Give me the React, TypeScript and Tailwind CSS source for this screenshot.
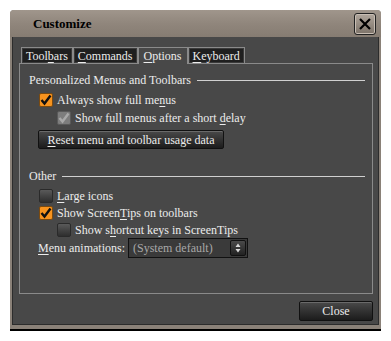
import React from "react";

function U({ children }: { children: React.ReactNode }) {
  return <span className="underline underline-offset-2 decoration-1">{children}</span>;
}

function Check({ state }: { state: "on" | "off" | "dis" }) {
  if (state === "on")
    return (
      <div className="w-[14px] h-[14px] rounded-[2px] bg-[#f7931e] border border-[#7a4a10] flex items-center justify-center shrink-0">
        <svg width="12" height="12" viewBox="0 0 12 12">
          <path d="M1.5 6 L4.5 9.5 L10.5 1.5" stroke="#111" strokeWidth="2.4" fill="none" />
        </svg>
      </div>
    );
  if (state === "dis")
    return (
      <div className="w-[14px] h-[14px] rounded-[2px] bg-[#7d7d7d] border border-[#5a5a5a] flex items-center justify-center shrink-0">
        <svg width="12" height="12" viewBox="0 0 12 12">
          <path d="M1.5 6 L4.5 9.5 L10.5 1.5" stroke="#a9a9a9" strokeWidth="2.4" fill="none" />
        </svg>
      </div>
    );
  return (
    <div className="w-[14px] h-[14px] rounded-[2px] bg-gradient-to-b from-[#5a5a5a] to-[#2e2e2e] border border-[#2a2a2a] shrink-0" />
  );
}

function Row({ state, indent, children }: { state: "on" | "off" | "dis"; indent?: boolean; children: React.ReactNode }) {
  return (
    <div className={`flex items-center h-[17px] gap-[4px] ${indent ? "pl-[37px]" : "pl-[19px]"}`}>
      <Check state={state} />
      <span className="whitespace-nowrap">{children}</span>
    </div>
  );
}

function GroupHead({ children }: { children: React.ReactNode }) {
  return (
    <div className="flex items-center h-[16px] pl-[9px] pr-[7px] gap-[6px]">
      <span className="whitespace-nowrap">{children}</span>
      <div className="flex-1 h-px bg-[#d0d0d0]" />
    </div>
  );
}

function Tab({ children, selected }: { children: React.ReactNode; selected?: boolean }) {
  if (selected)
    return (
      <div className="h-[17px] px-[5px] bg-[#484848] border border-b-0 border-[#8a8a8a] flex items-center relative top-px -mx-[1px] z-10">
        {children}
      </div>
    );
  return (
    <div className="h-[15px] px-[3px] bg-[#1f1f1f] outline outline-1 outline-[#8a8a8a] border border-[#3a3a3a] flex items-center">
      {children}
    </div>
  );
}

export default function App() {
  return (
    <div className="w-[391px] h-[341px] bg-white pt-[10px] pl-[10px] text-[12px] leading-none text-[#ececec] font-['Liberation_Serif',serif]">
      <div className="w-[371px] h-[321px] flex flex-col rounded-t-[4px] overflow-hidden bg-[#8a8178]">
        {/* title bar */}
        <div className="h-[27px] flex items-center bg-gradient-to-b from-[#a0968c] via-[#90867c] to-[#867c72] pl-[23px] pr-[5px]">
          <span className="font-bold text-[#000] text-[13px]">Customize</span>
          <div className="ml-auto w-[22px] h-[22px] rounded-[3px] border border-[#222] bg-gradient-to-b from-[#b0a69c] to-[#7d7369] flex items-center justify-center shadow-[inset_0_0_0_1px_#c8beb4]">
            <svg width="14" height="14" viewBox="0 0 14 14">
              <path d="M2 2 L12 12 M12 2 L2 12" stroke="#000" strokeWidth="2.2" />
            </svg>
          </div>
        </div>
        {/* body */}
        <div className="flex-1 flex flex-col ml-[2px] mr-[2px] mb-[4px] border-l border-r border-b border-[#2c2c2c] bg-[#484848]">
          <div className="flex-1 flex flex-col pl-[6px] pr-[5px]">
            {/* tabs */}
            <div className="flex items-end gap-[2px] pl-[3px] mt-[11px] h-[15px]">
              <Tab>Tool<U>b</U>ars</Tab>
              <Tab><U>C</U>ommands</Tab>
              <Tab selected><U>O</U>ptions</Tab>
              <Tab><U>K</U>eyboard</Tab>
            </div>
            {/* panel */}
            <div className="h-[231px] border border-[#8a8a8a] flex flex-col">
              <div className="mt-[8px]">
                <GroupHead>Personalized Menus and Toolbars</GroupHead>
              </div>
              <div className="mt-[3px]">
                <Row state="on">Always show full me<U>n</U>us</Row>
              </div>
              <div className="mt-[1px]">
                <Row state="dis" indent>Show full menus after a short <U>d</U>elay</Row>
              </div>
              <div className="mt-[4px] pl-[18px]">
                <div className="w-[186px] h-[19px] flex items-center justify-center rounded-[2px] border border-[#111] bg-gradient-to-b from-[#4a4a4a] to-[#1c1c1c] shadow-[inset_0_1px_0_#6a6a6a]">
                  <span className="whitespace-nowrap"><U>R</U>eset menu and toolbar usage data</span>
                </div>
              </div>
              <div className="mt-[19px]">
                <GroupHead>Other</GroupHead>
              </div>
              <div className="mt-[3px]">
                <Row state="off"><U>L</U>arge icons</Row>
              </div>
              <Row state="on">Show Screen<U>T</U>ips on toolbars</Row>
              <Row state="off" indent>Show s<U>h</U>ortcut keys in ScreenTips</Row>
              <div className="flex items-center h-[20px] pl-[18px]">
                <span className="w-[90px] whitespace-nowrap"><U>M</U>enu animations:</span>
                <div className="w-[120px] h-[20px] flex items-center border border-[#111] bg-[#3a3a3a] pl-[4px] pr-[1px]">
                  <span className="text-[#a8a8a8] whitespace-nowrap">(System default)</span>
                  <div className="ml-auto w-[16px] h-[16px] rounded-[2px] bg-gradient-to-b from-[#4a4a4a] to-[#222] border border-[#111] flex items-center justify-center">
                    <svg width="6" height="10" viewBox="0 0 6 10">
                      <path d="M3 0.5 L5.5 4 L0.5 4 Z M0.5 6 L5.5 6 L3 9.5 Z" fill="#d8d8d8" />
                    </svg>
                  </div>
                </div>
              </div>
            </div>
            {/* footer */}
            <div className="flex justify-end mt-[7px]">
              <div className="w-[74px] h-[20px] flex items-center justify-center rounded-[2px] border border-[#111] bg-gradient-to-b from-[#4a4a4a] to-[#1c1c1c] shadow-[inset_0_1px_0_#6a6a6a]">
                Close
              </div>
            </div>
          </div>
        </div>
        <div className="h-[2px] bg-[#000]" />
      </div>
    </div>
  );
}
